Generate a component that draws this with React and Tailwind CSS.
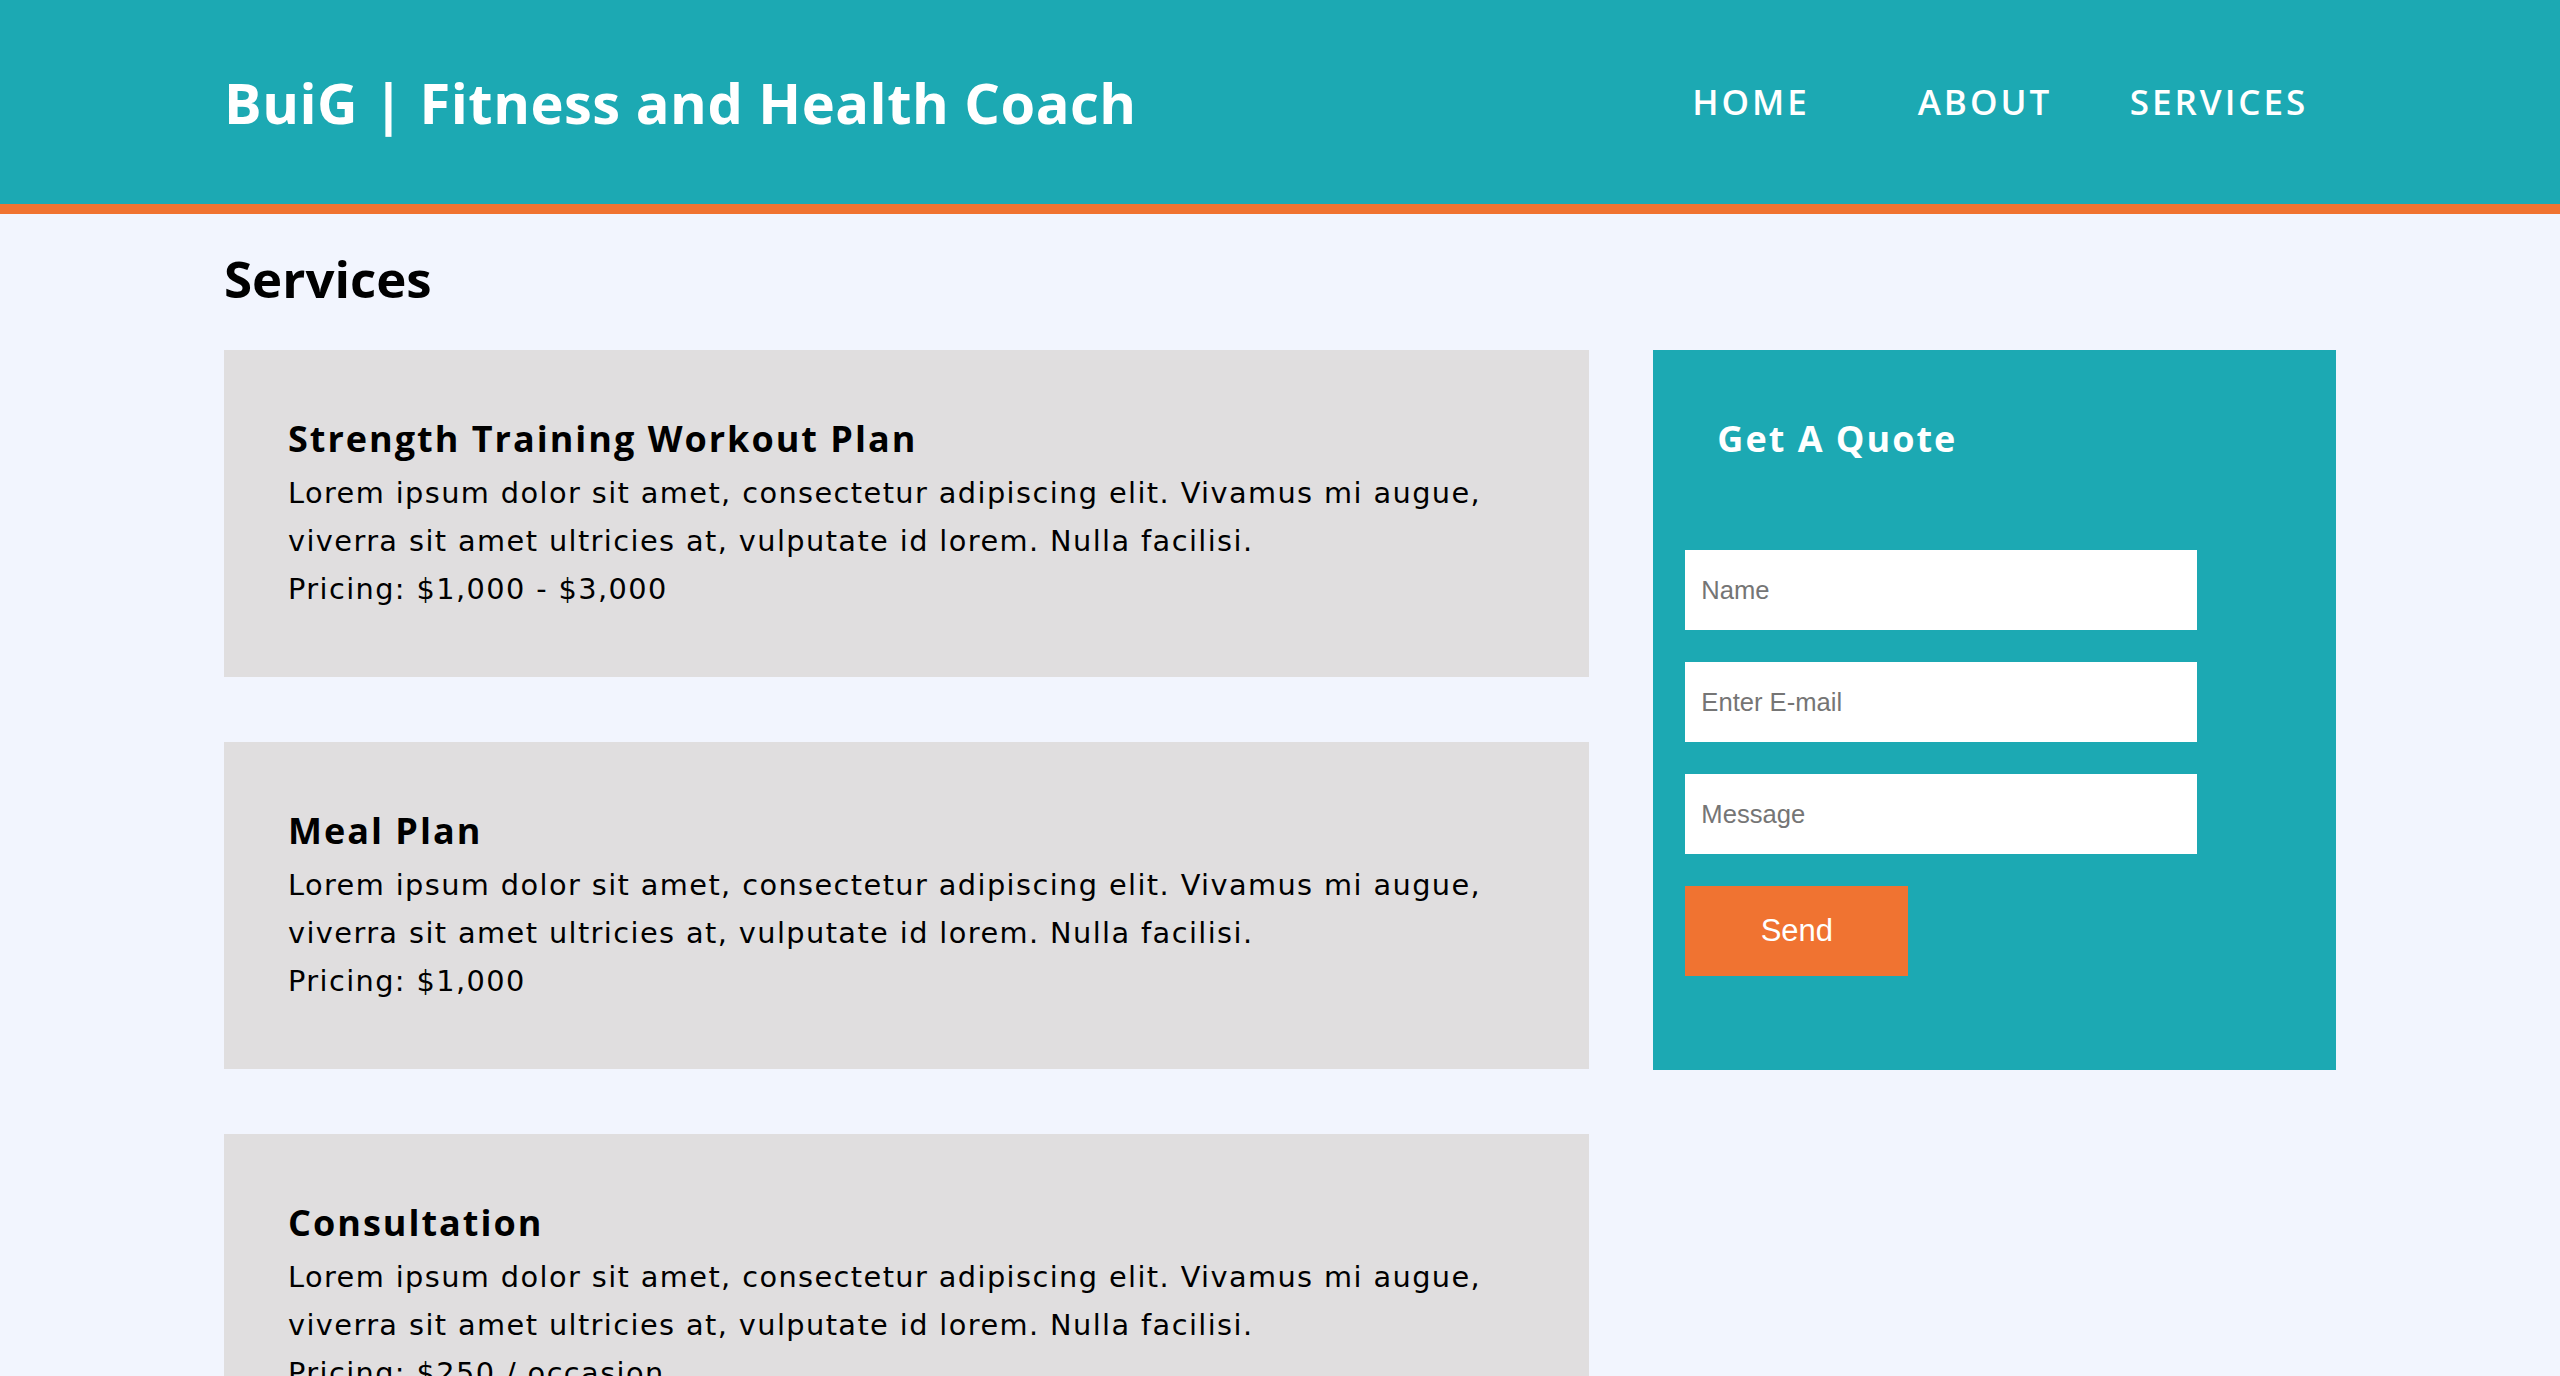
import React from 'react';

const services = [
  { title: 'Strength Training Workout Plan', price: 'Pricing: $1,000 - $3,000' },
  { title: 'Meal Plan', price: 'Pricing: $1,000' },
  { title: 'Consultation', price: 'Pricing: $250 / occasion' },
];

function ServiceCard({ title, price }) {
  return (
    <div className="bg-[#e0dedf] p-16">
      <h3 className="text-[36px] leading-[50px] font-bold tracking-[2px] text-black">{title}</h3>
      <p className="mt-[5px] text-[28.8px] leading-[48px] tracking-[1.4px] text-black font-['DejaVu_Sans',sans-serif]">
        Lorem ipsum dolor sit amet, consectetur adipiscing elit. Vivamus mi augue, viverra sit amet ultricies at, vulputate id lorem. Nulla facilisi.
        <br />
        {price}
      </p>
    </div>
  );
}

function QuoteForm() {
  return (
    <div className="bg-[#1ca9b3] px-8 pt-16 pb-[94px] self-start">
      <h3 className="pl-8 text-[36px] leading-[50px] font-bold tracking-[2px] text-white">Get A Quote</h3>
      <form className="mt-[86px] flex flex-col gap-8" onSubmit={(e) => e.preventDefault()}>
        <input
          type="text"
          placeholder="Name"
          className="w-[512px] h-20 bg-white px-4 text-[25.6px] font-['Liberation_Sans',Arial,sans-serif] placeholder:text-[#757575] outline-none"
        />
        <input
          type="email"
          placeholder="Enter E-mail"
          className="w-[512px] h-20 bg-white px-4 text-[25.6px] font-['Liberation_Sans',Arial,sans-serif] placeholder:text-[#757575] outline-none"
        />
        <input
          type="text"
          placeholder="Message"
          className="w-[512px] h-20 bg-white px-4 text-[25.6px] font-['Liberation_Sans',Arial,sans-serif] placeholder:text-[#757575] outline-none"
        />
        <button
          type="submit"
          className="w-[223px] h-[90px] bg-[#f07331] text-white text-[31px] font-['Liberation_Sans',Arial,sans-serif]"
        >
          Send
        </button>
      </form>
    </div>
  );
}

export default function App() {
  return (
    <div className="min-h-screen bg-[#f2f5fe] font-['Open_Sans',sans-serif]">
      <header className="bg-[#1ca9b3] border-b-[10px] border-[#f07331]">
        <div className="mx-auto w-[2112px] h-[204px] flex items-center justify-between">
          <h1 className="text-[56px] font-bold tracking-[0.5px] text-white">BuiG | Fitness and Health Coach</h1>
          <nav className="flex">
            <a href="#" className="w-[234px] text-center text-[35px] font-semibold tracking-[3px] text-white">HOME</a>
            <a href="#" className="w-[234px] text-center text-[35px] font-semibold tracking-[3px] text-white">ABOUT</a>
            <a href="#" className="w-[234px] text-center text-[35px] font-semibold tracking-[3px] text-white">SERVICES</a>
          </nav>
        </div>
      </header>

      <main className="mx-auto w-[2112px] pt-[33px] pb-16">
        <h2 className="text-[51px] leading-[62px] font-bold text-black mb-[41px]">Services</h2>
        <div className="grid grid-cols-[2fr_1fr] gap-16">
          <div className="flex flex-col gap-[65px]">
            {services.map((s) => (
              <ServiceCard key={s.title} title={s.title} price={s.price} />
            ))}
          </div>
          <QuoteForm />
        </div>
      </main>
    </div>
  );
}
